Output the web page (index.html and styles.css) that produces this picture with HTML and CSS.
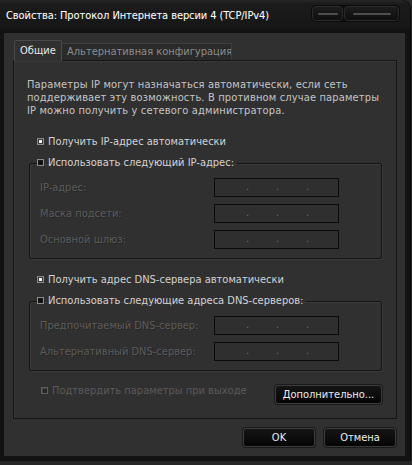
FILE: index.html
```html
<!DOCTYPE html>
<html lang="ru">
<head>
<meta charset="utf-8">
<title>Свойства: Протокол Интернета версии 4 (TCP/IPv4)</title>
<link rel="stylesheet" href="styles.css">
</head>
<body>
<div class="window">
  <div class="titlebar">
    <span class="title">Свойства: Протокол Интернета версии 4 (TCP/IPv4)</span>
    <div class="caption-btns">
      <span class="cbtn cbtn-small"><i></i></span>
      <span class="cbtn cbtn-wide"><i></i></span>
    </div>
  </div>
  <div class="client">
    <div class="tabs">
      <div class="tab tab-active">Общие</div>
      <div class="tab">Альтернативная конфигурация</div>
    </div>
    <div class="panel">
      <p class="desc">Параметры IP могут назначаться автоматически, если сеть<br>поддерживает эту возможность. В противном случае параметры<br>IP можно получить у сетевого администратора.</p>

      <div class="opt opt-first"><span class="radio radio-on"></span>Получить IP-адрес автоматически</div>
      <fieldset class="group">
        <legend class="opt legend"><span class="radio"></span>Использовать следующий IP-адрес:</legend>
        <div class="row"><span class="lbl">IP-адрес:</span><span class="ip"><i>.</i><i>.</i><i>.</i></span></div>
        <div class="row"><span class="lbl">Маска подсети:</span><span class="ip"><i>.</i><i>.</i><i>.</i></span></div>
        <div class="row"><span class="lbl">Основной шлюз:</span><span class="ip"><i>.</i><i>.</i><i>.</i></span></div>
      </fieldset>

      <div class="opt opt-dns"><span class="radio radio-on"></span>Получить адрес DNS-сервера автоматически</div>
      <fieldset class="group">
        <legend class="opt legend"><span class="radio"></span>Использовать следующие адреса DNS-серверов:</legend>
        <div class="row"><span class="lbl">Предпочитаемый DNS-сервер:</span><span class="ip"><i>.</i><i>.</i><i>.</i></span></div>
        <div class="row"><span class="lbl">Альтернативный DNS-сервер:</span><span class="ip"><i>.</i><i>.</i><i>.</i></span></div>
      </fieldset>

      <div class="footer-row">
        <div class="check"><span class="cb"></span>Подтвердить параметры при выходе</div>
        <button class="btn btn-adv" type="button">Дополнительно...</button>
      </div>
    </div>
    <div class="actions">
      <button class="btn btn-action" type="button">OK</button>
      <button class="btn btn-action" type="button">Отмена</button>
    </div>
  </div>
</div>
</body>
</html>
```

FILE: styles.css
```css
html, body {
  margin: 0;
  padding: 0;
}
body {
  width: 412px;
  height: 465px;
  overflow: hidden;
  background: #262626;
  font-family: "DejaVu Sans Condensed", "DejaVu Sans", sans-serif;
  font-stretch: semi-condensed;
  font-size: 11px;
  color: #cfcfcf;
}
.window {
  width: 410px;
  height: 461px;
  box-sizing: border-box;
  background: #131313;
  border-top-right-radius: 9px;
  padding-bottom: 5px;
  display: flex;
  flex-direction: column;
  box-shadow: 1px 0 0 #0a0a0a;
}
.titlebar {
  height: 33px;
  box-sizing: border-box;
  display: flex;
  align-items: flex-start;
  background: linear-gradient(#262626 0, #1b1b1b 4px, #171717 26px, #101010 33px);
  border-top-right-radius: 9px;
}
.title {
  color: #ffffff;
  padding: 8px 0 0 6px;
  line-height: 15px;
  letter-spacing: -0.08px;
  white-space: nowrap;
  text-shadow: 0 0 3px rgba(255,255,255,0.12);
}
.caption-btns {
  margin: 5px 10px 0 auto;
  display: flex;
  gap: 1px;
  padding: 1px;
  background: #0b0b0b;
  border-radius: 5px;
}
.cbtn {
  height: 13px;
  border: 1px solid #2b2b2b;
  border-radius: 4px;
  background: linear-gradient(#1c1c1c, #0e0e0e);
  display: flex;
  align-items: center;
  justify-content: center;
}
.cbtn i {
  display: block;
  height: 2px;
  background: #4d4d4d;
  border-radius: 1px;
}
.cbtn-small { width: 29px; }
.cbtn-small i { width: 20px; }
.cbtn-wide { width: 53px; }
.cbtn-wide i { width: 38px; }

.client {
  margin-left: 4px;
  width: 401px;
  height: 423px;
  box-sizing: border-box;
  background: #303030;
  padding: 7px 8px 0 9px;
}
.tabs {
  display: flex;
  align-items: flex-end;
  height: 20px;
  margin-left: 1px;
  position: relative;
  z-index: 1;
}
.tab {
  height: 17px;
  box-sizing: border-box;
  width: 170px;
  padding-left: 5px;
  line-height: 16px;
  white-space: nowrap;
  overflow: hidden;
  background: #2a2a2a;
  color: #8c8c8c;
  border: 1px solid #3e3e3e;
  border-bottom: none;
  border-left: none;
}
.tab-active {
  width: 48px;
  height: 21px;
  margin-bottom: -1px;
  padding-left: 5px;
  line-height: 20px;
  background: #303030;
  color: #e8e8e8;
  border: 1px solid #4a4a4a;
  border-bottom: none;
  border-radius: 2px 2px 0 0;
}
.panel {
  height: 359px;
  box-sizing: border-box;
  border: 1px solid #151515;
  box-shadow: inset 1px 1px 0 #383838;
  padding: 17px 14px 0 13px;
}
.desc {
  margin: 0;
  line-height: 13px;
  letter-spacing: 0.15px;
  color: #c4c4c4;
  white-space: nowrap;
}
.opt {
  display: flex;
  align-items: center;
  height: 15px;
  line-height: 15px;
  color: #d2d2d2;
  white-space: nowrap;
}
.opt-first {
  margin: 17px 0 0 10px;
}
.opt-dns {
  margin: 13px 0 0 10px;
}
.radio {
  width: 7px;
  height: 7px;
  box-sizing: border-box;
  margin-right: 4px;
  border: 1px solid #8a8a8a;
  background: #0c0c0c;
  box-shadow: inset 0 0 0 1px #1a1a1a;
}
.radio-on {
  background: #f2f2f2;
  box-shadow: inset 0 0 0 1px #3a3a3a;
}
.group {
  margin: 6px 0 0 2px;
  width: 353px;
  box-sizing: border-box;
  min-inline-size: 0;
  padding: 6px 0 9px 0;
  border: 1px solid #161616;
  box-shadow: inset 1px 1px 0 #3a3a3a, 1px 1px 0 #393939;
  border-radius: 2px;
}
.legend {
  padding: 0 3px 2px 0;
  margin-left: 7px;
  height: 17px;
  box-sizing: border-box;
}
.row {
  display: flex;
  align-items: center;
  height: 19px;
  margin-top: 7px;
}
.row:first-of-type {
  margin-top: 0;
}
.lbl {
  width: 184px;
  padding-left: 10px;
  box-sizing: border-box;
  color: #5c5c5c;
  text-shadow: 1px 1px 0 #262626;
  white-space: nowrap;
}
.ip {
  width: 125px;
  height: 19px;
  box-sizing: border-box;
  border: 1px solid #0a0a0a;
  background: #2f2f2f;
  display: flex;
  padding-left: 31px;
  gap: 26px;
}
.ip i {
  font-style: normal;
  width: 4px;
  color: #6e6e6e;
  line-height: 15px;
}
.footer-row {
  display: flex;
  align-items: flex-start;
  margin: 14px 0 0 0;
  padding-left: 14px;
  width: 355px;
  box-sizing: border-box;
}
.check {
  display: flex;
  align-items: center;
  height: 15px;
  margin-top: -2px;
  color: #5a5a5a;
  white-space: nowrap;
}
.cb {
  width: 7px;
  height: 7px;
  box-sizing: border-box;
  border: 1px solid #5e5e5e;
  background: #262626;
  margin-right: 4px;
  box-shadow: inset 1px 1px 0 #444;
}
.btn {
  font-family: inherit;
  font-stretch: inherit;
  font-size: 11px;
  color: #ececec;
  height: 19px;
  box-sizing: border-box;
  padding: 0;
  border: 1px solid #3c3c3c;
  border-radius: 3px;
  background: linear-gradient(#151515, #050505);
  box-shadow: 0 0 0 1px #1a1a1a;
  line-height: 17px;
}
.btn-adv {
  margin-left: auto;
  width: 107px;
}
.actions {
  display: flex;
  justify-content: flex-end;
  gap: 9px;
  margin: 9px 1px 0 0;
}
.btn-action {
  width: 72px;
}
```
